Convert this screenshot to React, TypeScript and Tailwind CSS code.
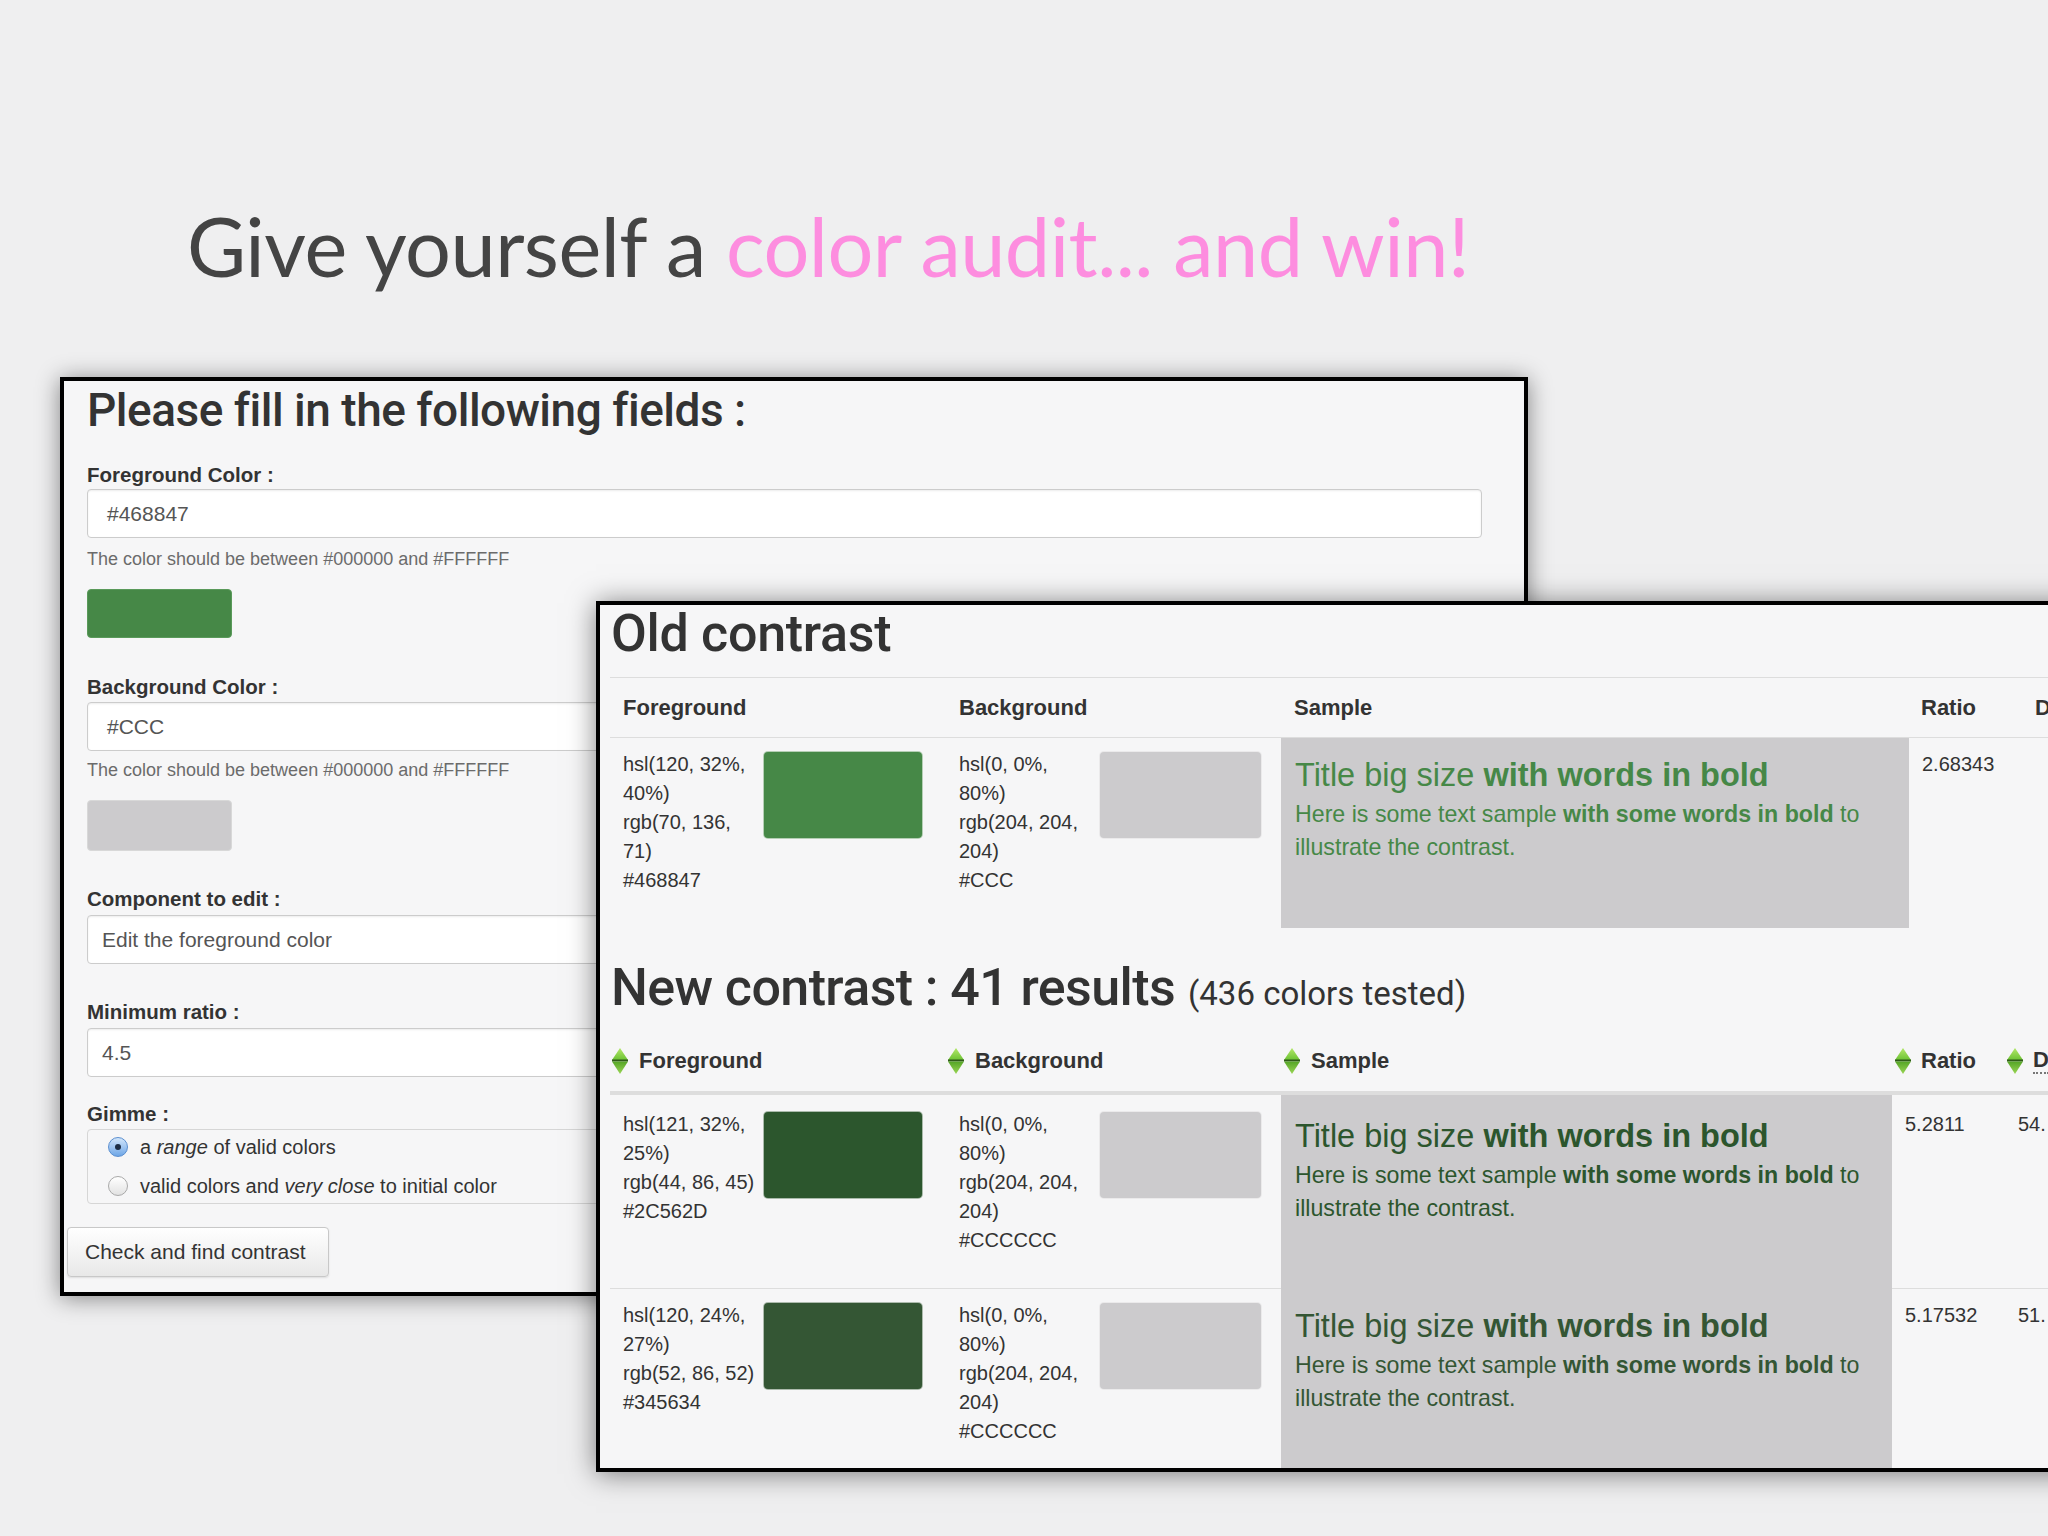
import React from 'react';

const sans = "font-['Liberation_Sans',Arial,sans-serif]";
const head = "font-['Roboto',sans-serif]";

type Row = {
  fg: string[];
  fgColor: string;
  bg: string[];
  bgColor: string;
  ratio: string;
  dist: string;
};

const oldRow: Row = {
  fg: ['hsl(120, 32%, 40%)', 'rgb(70, 136, 71)', '#468847'],
  fgColor: '#468847',
  bg: ['hsl(0, 0%, 80%)', 'rgb(204, 204, 204)', '#CCC'],
  bgColor: '#cccbcd',
  ratio: '2.68343',
  dist: '',
};

const newRows: Row[] = [
  {
    fg: ['hsl(121, 32%, 25%)', 'rgb(44, 86, 45)', '#2C562D'],
    fgColor: '#2C562D',
    bg: ['hsl(0, 0%, 80%)', 'rgb(204, 204, 204)', '#CCCCCC'],
    bgColor: '#cccbcd',
    ratio: '5.2811',
    dist: '54.',
  },
  {
    fg: ['hsl(120, 24%, 27%)', 'rgb(52, 86, 52)', '#345634'],
    fgColor: '#345634',
    bg: ['hsl(0, 0%, 80%)', 'rgb(204, 204, 204)', '#CCCCCC'],
    bgColor: '#cccbcd',
    ratio: '5.17532',
    dist: '51.',
  },
];

// petit losange vert de tri (tablesorter)
const SortIcon = () => (
  <svg width="16" height="26" viewBox="0 0 16 26" className="shrink-0">
    <defs>
      <linearGradient id="sortUp" x1="0" y1="0" x2="0" y2="1">
        <stop offset="0" stopColor="#b4e86a" />
        <stop offset="1" stopColor="#6cc233" />
      </linearGradient>
      <linearGradient id="sortDown" x1="0" y1="0" x2="0" y2="1">
        <stop offset="0" stopColor="#55a526" />
        <stop offset="1" stopColor="#9ad655" />
      </linearGradient>
    </defs>
    <path d="M8 0 L16 12 L0 12 Z" fill="url(#sortUp)" />
    <rect x="0" y="11.5" width="16" height="2" fill="#2f5a18" />
    <path d="M0 13.5 L16 13.5 L8 26 Z" fill="url(#sortDown)" />
  </svg>
);

const Swatch = ({ color, w }: { color: string; w: string }) => (
  <div
    className={`${w} h-[88px] mt-[1px] rounded-[5px] border border-white/60 shrink-0`}
    style={{ backgroundColor: color }}
  />
);

const ColorCell = ({ lines, color, sw, pt }: { lines: string[]; color: string; sw: string; pt: string }) => (
  <div className={`flex items-start pl-[13px] ${pt}`}>
    <div className="w-[137px] mr-[3px] text-[20px] leading-[29px] text-[#333]">
      {lines.map(l => (
        <div key={l}>{l}</div>
      ))}
    </div>
    <Swatch color={color} w={sw} />
  </div>
);

const SampleCell = ({ color, pt }: { color: string; pt: string }) => (
  <div className={`bg-[#cccbcd] pl-[14px] pr-[10px] ${pt}`} style={{ color }}>
    <div className="text-[32.5px] leading-[40px]">
      Title big size <b>with words in bold</b>
    </div>
    <p className="mt-[3px] text-[23.2px] leading-[33px]">
      <span>
        Here is some text sample <b>with some words in bold</b> to
      </span>
      <br />
      <span>illustrate the contrast.</span>
    </p>
  </div>
);

const DataRow = ({
  row,
  sampleW,
  textPt,
  samplePt,
  h,
  divider,
}: {
  row: Row;
  sampleW: string;
  textPt: string;
  samplePt: string;
  h: string;
  divider: boolean;
}) => (
  <div className={`flex ${h} ${divider ? 'border-b border-[#dddddd]' : ''}`}>
    <div className="w-[336px] shrink-0">
      <ColorCell lines={row.fg} color={row.fgColor} sw="w-[160px]" pt={textPt} />
    </div>
    <div className="w-[335px] shrink-0">
      <ColorCell lines={row.bg} color={row.bgColor} sw="w-[163px]" pt={textPt} />
    </div>
    <div className={`${sampleW} shrink-0 -mb-[1px]`}>
      <SampleCell color={row.fgColor} pt={samplePt} />
    </div>
    <div className={`w-[113px] shrink-0 pl-[13px] ${textPt} text-[20px] leading-[29px] text-[#333]`}>{row.ratio}</div>
    <div className={`w-[200px] shrink-0 pl-[13px] ${textPt} text-[20px] leading-[29px] text-[#333]`}>{row.dist}</div>
  </div>
);

const Field = ({ label, value, mt, inputMt, pl }: { label: string; value: string; mt: string; inputMt: string; pl: string }) => (
  <div className={mt}>
    <div className="text-[20.5px] leading-[24px] font-bold text-[#333]">{label}</div>
    <div
      className={`${inputMt} w-[1395px] h-[49px] bg-white border border-[#cccccc] rounded-[4px] flex items-center ${pl} text-[21px] text-[#555] shadow-[inset_0_1px_2px_rgba(0,0,0,0.08)]`}
    >
      {value}
    </div>
  </div>
);

const Help = ({ mt }: { mt: string }) => (
  <div className={`${mt} text-[18px] leading-[20px] text-[#6b6b6b]`}>
    The color should be between #000000 and #FFFFFF
  </div>
);

const Radio = ({ checked }: { checked?: boolean }) =>
  checked ? (
    <span className="w-[20px] h-[20px] rounded-full border border-[#5b8fd0] bg-gradient-to-b from-[#d3e6fa] to-[#6ea6e6] flex items-center justify-center shrink-0">
      <span className="w-[6px] h-[6px] rounded-full bg-[#1d2d44]" />
    </span>
  ) : (
    <span className="w-[20px] h-[20px] rounded-full border border-[#a9a9a9] bg-gradient-to-b from-white to-[#e2e2e2] shrink-0" />
  );

const FormPanel = () => (
  <div
    className={`absolute left-[60px] top-[377px] w-[1468px] h-[919px] border-[4px] border-black bg-[#f6f6f7] shadow-[0_2px_22px_rgba(0,0,0,0.45)] pl-[23px] pt-[4px] ${sans}`}
  >
    <h2 className={`${head} font-medium text-[46px] leading-[50px] text-[#333] tracking-[-0.5px]`}>
      Please fill in the following fields :
    </h2>

    <Field label="Foreground Color :" value="#468847" mt="mt-[28px]" inputMt="mt-[2px]" pl="pl-[19px]" />
    <Help mt="mt-[11px]" />
    <div className="mt-[20px] w-[145px] h-[49px] rounded-[4px] bg-[#468847] border border-[#5a9a5a]" />

    <Field label="Background Color :" value="#CCC" mt="mt-[37px]" inputMt="mt-[3px]" pl="pl-[19px]" />
    <Help mt="mt-[9px]" />
    <div className="mt-[20px] w-[145px] h-[51px] rounded-[4px] bg-[#cccbcd] border border-[#d8d8d8]" />

    <Field label="Component to edit :" value="Edit the foreground color" mt="mt-[36px]" inputMt="mt-[4px]" pl="pl-[14px]" />
    <Field label="Minimum ratio :" value="4.5" mt="mt-[36px]" inputMt="mt-[4px]" pl="pl-[14px]" />

    <div className="mt-[25px]">
      <div className="text-[20.5px] leading-[24px] font-bold text-[#333]">Gimme :</div>
      <div className="mt-[3px] w-[1395px] h-[75px] border border-[#d6d6d6] rounded-[4px] pl-[20px] pt-[6px] text-[20px] text-[#333]">
        <div className="flex items-center gap-[12px] h-[22px]">
          <Radio checked />
          <span>
            a <em>range</em> of valid colors
          </span>
        </div>
        <div className="flex items-center gap-[12px] h-[22px] mt-[17px]">
          <Radio />
          <span>
            valid colors and <em>very close</em> to initial color
          </span>
        </div>
      </div>
    </div>

    <div className="mt-[23px] -ml-[20px] w-[262px] h-[50px] rounded-[4px] border border-[#c8c8c8] bg-gradient-to-b from-white to-[#e8e8e8] flex items-center pl-[17px] text-[21px] text-[#333] shadow-[0_1px_2px_rgba(0,0,0,0.1)]">
      Check and find contrast
    </div>
  </div>
);

const ResultsPanel = () => (
  <div
    className={`absolute left-[596px] top-[601px] w-[1520px] h-[871px] border-[4px] border-black bg-[#f6f6f7] shadow-[0_2px_26px_rgba(0,0,0,0.5)] pl-[10px] pt-[1px] overflow-hidden ${sans}`}
  >
    <h2 className={`${head} font-medium text-[52px] leading-[56px] text-[#333] pl-[1px] tracking-[-0.3px]`}>Old contrast</h2>
    <div className="mt-[15px] h-[1px] bg-[#dddddd]" />

    <div className="flex h-[60px] items-center border-b border-[#dddddd] text-[22px] font-bold text-[#333]">
      <div className="w-[336px] pl-[13px] shrink-0">Foreground</div>
      <div className="w-[335px] pl-[13px] shrink-0">Background</div>
      <div className="w-[628px] pl-[13px] shrink-0">Sample</div>
      <div className="w-[113px] pl-[12px] shrink-0">Ratio</div>
      <div className="w-[200px] pl-[13px] shrink-0">D</div>
    </div>
    <DataRow row={oldRow} sampleW="w-[628px]" textPt="pt-[12px]" samplePt="pt-[17px] h-[190px]" h="h-[190px]" divider={false} />

    <h2 className={`${head} mt-[32px] text-[52px] leading-[56px] text-[#333] pl-[1px]`}>
      <span className="font-medium tracking-[-0.6px]">New contrast : 41 results</span>{' '}
      <span className="font-normal text-[33px]">(436 colors tested)</span>
    </h2>

    <div className="mt-[12px] flex h-[61px] pb-[4px] items-center border-b-[4px] border-[#dddddd] text-[22px] font-bold text-[#333]">
      <div className="w-[336px] pl-[2px] shrink-0 flex items-center gap-[11px]">
        <SortIcon />
        Foreground
      </div>
      <div className="w-[335px] pl-[2px] shrink-0 flex items-center gap-[11px]">
        <SortIcon />
        Background
      </div>
      <div className="w-[611px] pl-[3px] shrink-0 flex items-center gap-[11px]">
        <SortIcon />
        Sample
      </div>
      <div className="w-[113px] pl-[3px] shrink-0 flex items-center gap-[10px]">
        <SortIcon />
        Ratio
      </div>
      <div className="w-[200px] pl-[2px] shrink-0 flex items-center gap-[10px]">
        <SortIcon />
        <span className="border-b-2 border-dotted border-[#777] leading-[24px]">D</span>
      </div>
    </div>

    <DataRow
      row={newRows[0]}
      sampleW="w-[611px]"
      textPt="pt-[15px]"
      samplePt="pt-[21px] h-[194px]"
      h="h-[194px]"
      divider
    />
    <DataRow
      row={newRows[1]}
      sampleW="w-[611px]"
      textPt="pt-[12px]"
      samplePt="pt-[17px] h-[200px]"
      h="h-[200px]"
      divider={false}
    />
  </div>
);

export default function App() {
  return (
    <div className="relative w-[2048px] h-[1536px] overflow-hidden bg-[#efeff0]">
      <h1 className="pt-[205px] pl-[187px] font-['Lato',sans-serif] font-normal text-[81px] leading-[81px] text-[#444] tracking-[-0.5px]">
        Give yourself a <span className="text-[#fd8ddf]">color audit... and win!</span>
      </h1>
      <FormPanel />
      <ResultsPanel />
    </div>
  );
}
